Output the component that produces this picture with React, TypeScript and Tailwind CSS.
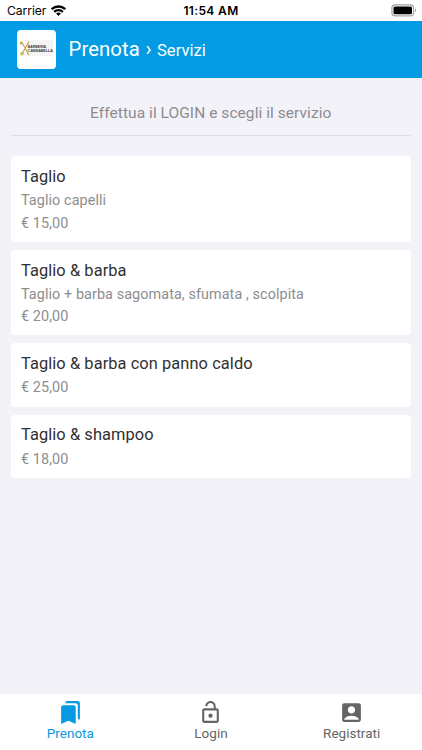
import type { ReactNode } from 'react';
import { MdAccountBox, MdBookmarks, MdLockOpen } from 'react-icons/md';

interface Service {
  title: string;
  detail?: string;
  price: string;
}

const services: Service[] = [
  { title: 'Taglio', detail: 'Taglio capelli', price: '€ 15,00' },
  { title: 'Taglio & barba', detail: 'Taglio + barba sagomata, sfumata , scolpita', price: '€ 20,00' },
  { title: 'Taglio & barba con panno caldo', price: '€ 25,00' },
  { title: 'Taglio & shampoo', price: '€ 18,00' },
];

function StatusBar() {
  return (
    <div className="grid h-[21px] shrink-0 grid-cols-3 items-center bg-white font-[Inter,sans-serif] text-black">
      <div className="flex items-center gap-[4px] pl-[7px] text-[12.2px] leading-[21px]">
        <span className="w-[40px] tracking-[-0.1px]">Carrier</span>
        <svg width="15" height="11" viewBox="0 0 15 11" fill="none" stroke="#000" strokeWidth="2.3">
          <path d="M.8 4.2a9.6 9.6 0 0 1 13.4 0" />
          <path d="M3.2 6.9a6.1 6.1 0 0 1 8.6 0" />
          <path d="M7.5 11 5.1 8.6a3.4 3.4 0 0 1 4.8 0Z" fill="#000" stroke="none" />
        </svg>
      </div>
      <div className="text-center text-[12px] leading-[21px] font-semibold tracking-[0.35px]">11:54 AM</div>
      <div className="flex justify-end pr-[5px]">
        <svg width="26" height="13" viewBox="0 0 26 13">
          <rect x=".9" y=".9" width="21.7" height="11" rx="3.2" fill="#fff" stroke="#a3a3a3" strokeWidth="1.2" />
          <rect x="2.5" y="2.5" width="18.5" height="7.8" rx="1.5" />
          <path d="M24 4.5c1.6.5 1.6 3.3 0 3.8Z" fill="#a3a3a3" />
        </svg>
      </div>
    </div>
  );
}

function Logo() {
  return (
    <div className="flex h-[39px] w-[39px] items-center justify-center rounded-[4px] bg-white">
      <svg width="35" height="22" viewBox="0 0 35 22" className="overflow-visible">
        <rect x="8" y="2" width="26" height="16" fill="#f4f4f4" />
        <g fill="none" stroke="#c9a24d" strokeWidth="1.2">
          <path d="M3 4.5 9.8 17M10 3.5 3.5 15" />
          <circle cx="2.3" cy="5" r="1" />
          <circle cx="3" cy="15.8" r="1.2" />
        </g>
        <g fill="#383838" fontFamily="Liberation Sans, sans-serif" fontWeight="700" fontSize="4">
          <text x="0" y="0" transform="translate(8.8 10) scale(.87 1)">BARBERIA</text>
          <text x="0" y="0" transform="translate(8.8 13.6) scale(.9 1)">CANNABELLA</text>
        </g>
      </svg>
    </div>
  );
}

function ServiceCard({ service }: { service: Service }) {
  return (
    <li className="rounded-[4px] bg-white px-[10.5px] pt-[9.9px] pb-[6.7px]">
      <h2 className="text-[16.4px] leading-[22.4px] tracking-[0.08px] text-[#303030]">{service.title}</h2>
      <div className="pt-[1.8px] text-[14.4px] leading-[22.4px] tracking-[0.08px] text-[#8d8d8d]">
        {service.detail && <p>{service.detail}</p>}
        <p>{service.price}</p>
      </div>
    </li>
  );
}

function Tab({ icon, label, active = false }: { icon: ReactNode; label: string; active?: boolean }) {
  return (
    <button
      className={`flex flex-col items-center pt-[5.5px] text-[13.5px] leading-[17px] ${active ? 'text-[#079ae0]' : 'text-[#656565]'}`}
    >
      {icon}
      <span>{label}</span>
    </button>
  );
}

export default function App() {
  return (
    <div className="flex h-[750px] w-[422px] flex-col overflow-hidden bg-[#f3f2f9] font-[Roboto,sans-serif]">
      <StatusBar />
      <header className="flex h-[56.5px] shrink-0 items-center gap-[13px] bg-[#039be3] pl-[16.5px] text-white">
        <Logo />
        <h1 className="flex items-baseline pt-[2px] text-[20.3px] leading-[26px]">
          <span className="w-[72px] tracking-[0.1px]">Prenota</span>
          <span className="ml-[5px] w-[7px] text-[20px]">›</span>
          <span className="ml-[4.5px] text-[16.6px]">Servizi</span>
        </h1>
      </header>
      <main className="flex-1 pr-[11px] pl-[10.5px]">
        <p className="border-b border-[#dddde4] pt-[25.6px] pb-[11.7px] text-center text-[15.5px] leading-[20px] tracking-[0.06px] text-[#8c8c90]">
          Effettua il LOGIN e scegli il servizio
        </p>
        <ul className="mt-[20.4px] flex flex-col gap-[8px]">
          {services.map((service) => (
            <ServiceCard key={service.title} service={service} />
          ))}
        </ul>
      </main>
      <nav className="grid h-[56px] shrink-0 grid-cols-3 bg-white">
        <Tab icon={<MdBookmarks size={25} />} label="Prenota" active />
        <Tab icon={<MdLockOpen size={25} />} label="Login" />
        <Tab icon={<MdAccountBox size={25} />} label="Registrati" />
      </nav>
    </div>
  );
}
